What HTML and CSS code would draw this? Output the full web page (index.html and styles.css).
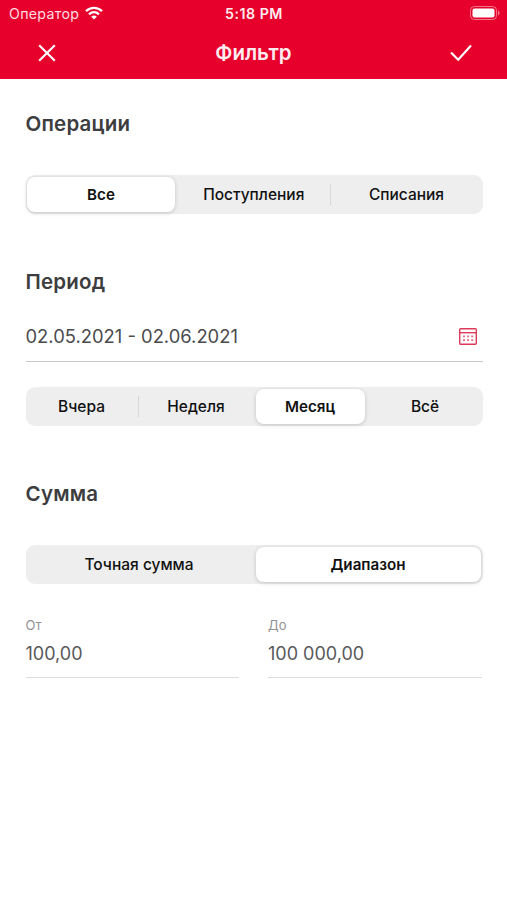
FILE: index.html
```html
<!DOCTYPE html>
<html lang="ru">
<head>
<meta charset="utf-8">
<title>Фильтр</title>
<link rel="stylesheet" href="styles.css">
</head>
<body>
<header class="header">
  <div class="status">
    <div class="carrier"><span>Оператор</span>
      <svg width="18" height="14" viewBox="0 0 18 14" fill="none" stroke="#fff" stroke-width="2.3"><path d="M1 5.2C5.6.8 12.4.8 17 5.2M4 8.3c3-2.8 7-2.8 10 0"/><path d="M9 13.6 6.2 10.7c1.6-1.5 4-1.5 5.6 0z" fill="#fff" stroke="none"/></svg>
    </div>
    <div class="clock">5:18 PM</div>
    <svg class="battery" width="30" height="14" viewBox="0 0 30 14"><rect x=".5" y=".5" width="26" height="13" rx="3.8" fill="none" stroke="#fff" stroke-opacity=".45"/><rect x="2.5" y="2.5" width="22" height="9" rx="2" fill="#fff"/><path d="M28 4.5c2 .8 2 4.2 0 5z" fill="#fff" fill-opacity=".5"/></svg>
  </div>
  <div class="nav">
    <svg width="18" height="18" viewBox="0 0 18 18" fill="none" stroke="#fff" stroke-width="2.1"><path d="m1.2 1.2 15.6 15.6m0-15.6L1.2 16.8"/></svg>
    <h1 class="title">Фильтр</h1>
    <svg width="22" height="18" viewBox="0 0 22 18" fill="none" stroke="#fff" stroke-width="2.2"><path d="m1 8.5 7.2 7.2L21 1.5"/></svg>
  </div>
</header>
<main class="content">
  <section class="operations">
    <h2 class="heading">Операции</h2>
    <div class="segments thirds">
      <button class="segment active">Все</button>
      <button class="segment divided income">Поступления</button>
      <button class="segment outgo">Списания</button>
    </div>
  </section>
  <section class="period">
    <h2 class="heading">Период</h2>
    <div class="date-field"><span>02.05.2021 - 02.06.2021</span>
      <svg width="18" height="17" viewBox="0 0 18 17" fill="none" stroke="#dd3a5a"><rect x=".7" y=".7" width="16.6" height="15.6" rx="1" stroke-width="1.4"/><path d="M1 4.7h16" stroke-width="1.4"/><path d="M4 8.3h10.5M4 12.2h10.5" stroke-width="1.8" stroke-dasharray="2 2.1" stroke-opacity=".75"/></svg>
    </div>
    <div class="segments quarters">
      <button class="segment divided first">Вчера</button>
      <button class="segment second">Неделя</button>
      <button class="segment active">Месяц</button>
      <button class="segment last">Всё</button>
    </div>
  </section>
  <section class="amount">
    <h2 class="heading">Сумма</h2>
    <div class="segments halves">
      <button class="segment exact">Точная сумма</button>
      <button class="segment active">Диапазон</button>
    </div>
    <div class="range">
      <div class="field"><div class="label">От</div><div class="value">100,00</div></div>
      <div class="field"><div class="label">До</div><div class="value">100 000,00</div></div>
    </div>
  </section>
</main>
</body>
</html>
```

FILE: styles.css
```css
* { box-sizing: border-box; }
body { margin: 0; min-height: 900px; background: #fff; color: #3d3d3f; font-family: Inter, sans-serif; }
h1, h2 { margin: 0; }
svg { display: block; flex: none; }
.header { height: 79px; background: #e6002b; color: #fff; }
.status { height: 27px; padding: 0 7px 0 9px; display: grid; grid-template-columns: 1fr auto 1fr; align-items: center; }
.carrier { display: flex; align-items: center; gap: 6px; font-size: 14.2px; letter-spacing: .3px; color: #ffdce2; }
.carrier svg { margin-top: -2px; }
.clock { font-size: 14.2px; font-weight: 600; letter-spacing: .5px; margin-left: -1px; color: #ffecef; }
.battery { justify-self: end; margin-top: -1px; }
.nav { height: 52px; padding: 0 35px 1px 38px; display: flex; align-items: center; justify-content: space-between; }
.title { font-size: 20.5px; font-weight: 600; margin-left: 1px; color: #ffecef; }
.content { padding: 0 24.5px 0 25.5px; }
.heading { font-size: 20.5px; line-height: 24px; font-weight: 600; letter-spacing: .2px; }
.operations { padding-top: 33px; }
.operations .segments { margin-top: 39px; }
.period { padding-top: 56px; }
.amount { padding-top: 56px; }
.amount .segments { margin-top: 39px; }
.segments { height: 39px; padding: 2px; display: grid; border-radius: 9px; background: #eee; }
.operations .segments { padding-left: 1.5px; }
.thirds { grid-template-columns: 148px 155.5px 1fr; }
.quarters { grid-template-columns: 111px 117px 109px 1fr; margin-top: 25px; }
.halves { grid-template-columns: 228px 1fr; }
.segment { position: relative; margin: 0; padding: 0; border: 0; border-radius: 8px; background: transparent; color: #111; font: 500 15.5px Inter, sans-serif; }
.income { padding-left: 2px; }
.outgo { padding-left: 2px; }
.first { padding-right: 3px; }
.second { padding-right: 2px; }
.last { padding-left: 5px; }
.exact { padding-right: 5px; }
.active { background: #fff; box-shadow: 0 1px 4px rgba(0,0,0,.18); font-weight: 600; font-size: 15.2px; }
.divided::after { content: ""; position: absolute; right: 0; top: 7px; width: 1px; height: 21px; background: #d8d8da; }
.date-field { height: 51px; margin-top: 17px; padding-right: 6px; border-bottom: 1px solid #c8c8c8; display: flex; align-items: center; justify-content: space-between; font-size: 18.4px; color: #4b4b4d; }
.range { margin-top: 32px; display: grid; grid-template-columns: 213.5px 214px; gap: 29px; }
.field { height: 62px; border-bottom: 1px solid #dcdcdc; }
.label { font-size: 13px; line-height: 18px; color: #929294; }
.value { margin-top: 8px; font-size: 18px; line-height: 24px; color: #59595b; }
```
